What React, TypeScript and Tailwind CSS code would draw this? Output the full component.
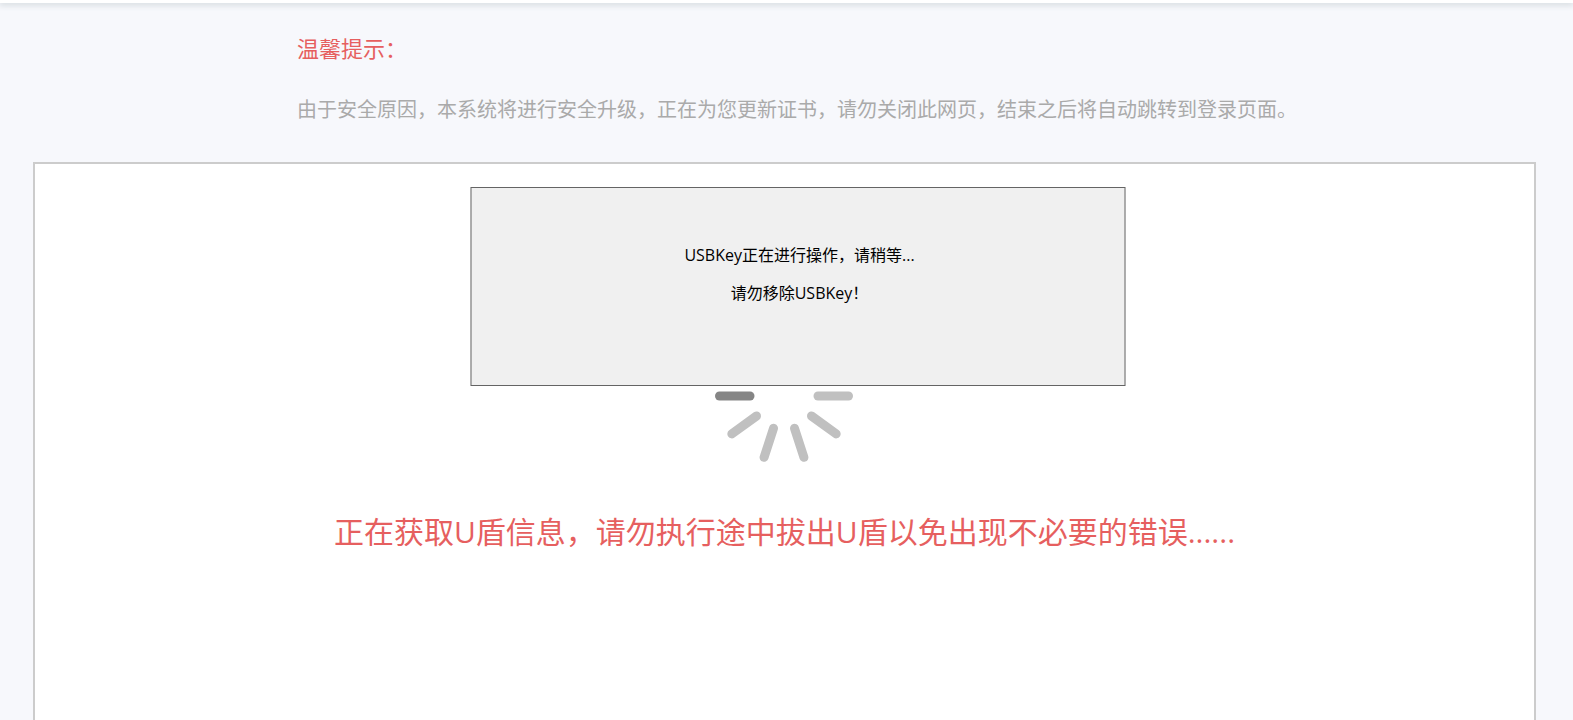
import React from 'react';

interface Spoke {
  angle: number;
  color: string;
}

const spokes: Spoke[] = Array.from({ length: 10 }, (_, i) => ({
  angle: i * 36,
  color: i === 5 ? '#858585' : '#c0c0c0',
}));

const Spinner: React.FC = () => (
  <svg className="h-[140px] w-[140px]" viewBox="-69 -70 140 140" role="img" aria-label="加载中">
    {spokes.map((spoke) => (
      <line
        key={spoke.angle}
        x1="34"
        y1="0"
        x2="64.5"
        y2="0"
        stroke={spoke.color}
        strokeWidth="9"
        strokeLinecap="round"
        transform={`rotate(${spoke.angle})`}
      />
    ))}
  </svg>
);

const UsbKeyDialog: React.FC = () => (
  <div
    role="alertdialog"
    aria-label="USBKey"
    className="absolute top-[23px] left-1/2 ml-[13px] h-[199px] w-[655px] -translate-x-1/2 border border-[#646464] bg-[#f0f0f0] pt-12 pl-1 text-center text-base leading-[38px] text-black"
  >
    <p>USBKey正在进行操作，请稍等...</p>
    <p>请勿移除USBKey！</p>
  </div>
);

const App: React.FC = () => {
  return (
    <div className="flex min-h-screen flex-col bg-[#f7f8fc] font-['Open_Sans','Noto_Sans_CJK_SC',sans-serif]">
      {/* Top bar */}
      <header className="h-[3px] bg-white shadow-[0_1px_6px_1px_#cfd6da]" />

      {/* Notice */}
      <section className="pt-[27px] pr-8 pb-8 pl-[297px]">
        <h1 className="text-[22px] leading-9 text-[#e65f5f]">温馨提示：</h1>
        <p className="mt-6 text-[20px] leading-10 text-[#aaa]">
          由于安全原因，本系统将进行安全升级，正在为您更新证书，请勿关闭此网页，结束之后将自动跳转到登录页面。
        </p>
      </section>

      {/* Progress panel */}
      <main className="relative mr-[37px] ml-[33px] flex flex-1 flex-col items-center border-2 border-b-0 border-[#ccc] bg-white pt-[162px]">
        <Spinner />
        <p className="mt-10 text-center text-[30px] leading-[52px] text-[#e65f5f]">
          正在获取U盾信息，请勿执行途中拔出U盾以免出现不必要的错误......
        </p>
        <UsbKeyDialog />
      </main>
    </div>
  );
};

export default App;
